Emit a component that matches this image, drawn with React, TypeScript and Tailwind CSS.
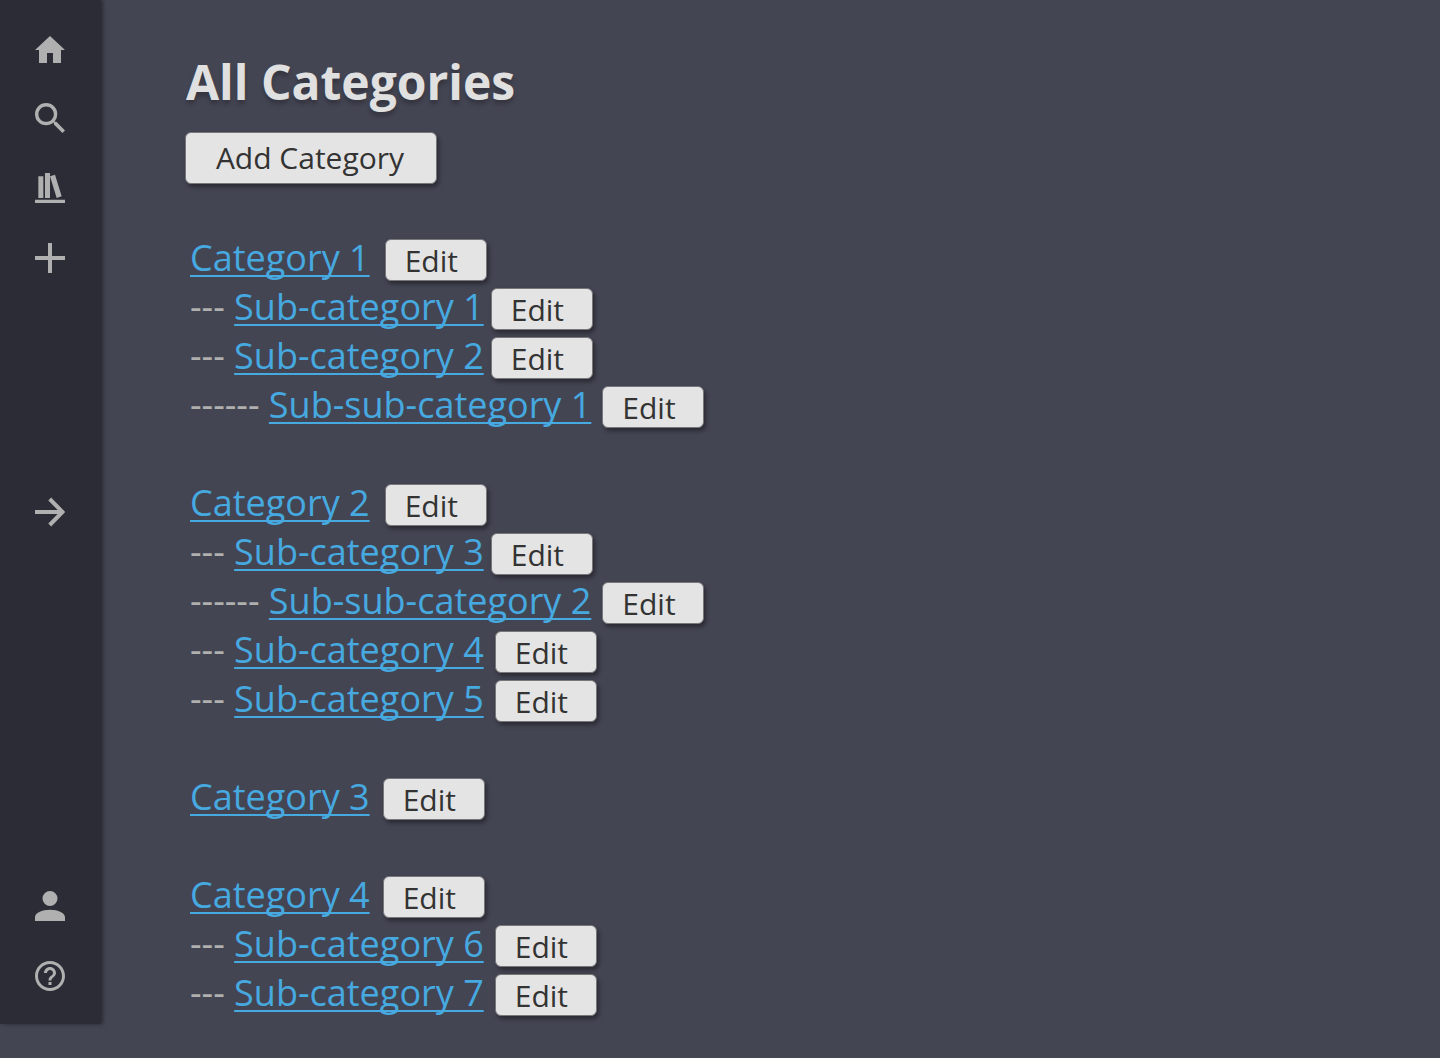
import type { ReactNode } from "react";

type Entry = { name: string; dashes: string; gap: string };

const groups: Entry[][] = [
  [
    { name: "Category 1", dashes: "", gap: "gap-[15px]" },
    { name: "Sub-category 1", dashes: "---", gap: "gap-[7px]" },
    { name: "Sub-category 2", dashes: "---", gap: "gap-[7px]" },
    { name: "Sub-sub-category 1", dashes: "------", gap: "gap-[11px]" },
  ],
  [
    { name: "Category 2", dashes: "", gap: "gap-[15px]" },
    { name: "Sub-category 3", dashes: "---", gap: "gap-[7px]" },
    { name: "Sub-sub-category 2", dashes: "------", gap: "gap-[11px]" },
    { name: "Sub-category 4", dashes: "---", gap: "gap-[11px]" },
    { name: "Sub-category 5", dashes: "---", gap: "gap-[11px]" },
  ],
  [{ name: "Category 3", dashes: "", gap: "gap-[13px]" }],
  [
    { name: "Category 4", dashes: "", gap: "gap-[13px]" },
    { name: "Sub-category 6", dashes: "---", gap: "gap-[11px]" },
    { name: "Sub-category 7", dashes: "---", gap: "gap-[11px]" },
  ],
];

function NavIcon({ label, box, children }: { label: string; box: string; children: ReactNode }) {
  return (
    <a href="#" aria-label={label} className="block size-[30px] text-[#b0b0b0]">
      <svg viewBox={box} className="block size-full" fill="currentColor" aria-hidden="true">
        {children}
      </svg>
    </a>
  );
}

function Sidebar() {
  return (
    <nav
      aria-label="Main"
      className="mb-[34px] flex w-[101px] shrink-0 flex-col bg-[#2c2c36] py-[33px] pl-[35px] shadow-[2px_0px_4px_rgba(0,0,0,0.4)]"
    >
      <div className="flex flex-1 flex-col gap-10">
        <NavIcon label="Home" box="0 0 30 30">
          <path d="M15 3 30 17h-4v13h-8V20h-6v10H4V17H0z" />
        </NavIcon>
        <NavIcon label="Search" box="3 3 17.49 17.49">
          <path d="M15.5 14h-.79l-.28-.27A6.47 6.47 0 0 0 16 9.5 6.5 6.5 0 1 0 9.5 16c1.61 0 3.09-.59 4.23-1.57l.27.28v.79l5 4.99L20.49 19l-4.99-5zm-6 0C7.01 14 5 11.99 5 9.5S7.01 5 9.5 5 14 7.01 14 9.5 11.99 14 9.5 14z" />
        </NavIcon>
        <NavIcon label="Library" box="3 3 18 18">
          <path d="M9 3v15h3V3H9m3 2 4 13 3-1-4-13-3 1M5 5v13h3V5H5M3 19v2h18v-2H3z" />
        </NavIcon>
        <NavIcon label="Add" box="0 0 30 30">
          <path d="M13 0h4v13h13v4H17v13h-4V17H0v-4h13z" />
        </NavIcon>
      </div>
      <NavIcon label="Expand" box="0 0 30 30">
        <path d="M0 13h26v4H0z" />
        <path d="M14.7 2 27.5 15 14.7 28" fill="none" stroke="currentColor" strokeWidth="4" />
      </NavIcon>
      <div className="flex flex-1 flex-col justify-end gap-10">
        <NavIcon label="Account" box="4 4 16 16">
          <path d="M12 4a4 4 0 1 1 0 8 4 4 0 0 1 0-8m0 10c4.42 0 8 1.79 8 4v2H4v-2c0-2.21 3.58-4 8-4z" />
        </NavIcon>
        <NavIcon label="Help" box="2 2 20 20">
          <path d="M11 18h2v-2h-2v2zm1-16C6.48 2 2 6.48 2 12s4.48 10 10 10 10-4.48 10-10S17.52 2 12 2zm0 18c-4.41 0-8-3.59-8-8s3.59-8 8-8 8 3.59 8 8-3.59 8-8 8zm0-14c-2.21 0-4 1.79-4 4h2c0-1.1.9-2 2-2s2 .9 2 2c0 2-3 1.75-3 5h2c0-2.25 3-2.5 3-5 0-2.21-1.79-4-4-4z" />
        </NavIcon>
      </div>
    </nav>
  );
}

function Row({ name, dashes, gap }: Entry) {
  return (
    <li className={`flex h-[49px] items-start ${gap}`}>
      <span className="whitespace-pre text-[36px] leading-[49px] text-[#b0b0b0]">
        {dashes && `${dashes} `}
        <a
          href="#"
          className="text-[#46a9e0] underline decoration-2 underline-offset-[4px] [text-decoration-skip-ink:none]"
        >
          {name}
        </a>
      </span>
      <button
        type="button"
        aria-label={`Edit ${name}`}
        className="mt-[6px] h-[42px] w-[102px] rounded-[6px] border border-[#77777a] bg-[#e4e4e4] pl-[19px] pt-[2px] text-left text-[30px] leading-[38px] text-[#333333] shadow-[2px_3px_4px_rgba(0,0,0,0.4)]"
      >
        Edit
      </button>
    </li>
  );
}

export default function App() {
  return (
    <div className="flex min-h-screen bg-[#444553] font-['Open_Sans',sans-serif]">
      <Sidebar />
      <main className="min-w-0 flex-1 pb-10 pl-[84px] pt-[49px]">
        <h1 className="pl-px text-[48px] font-bold leading-[65px] text-[#e0e0e0] [text-shadow:0_4px_4px_rgba(0,0,0,0.25)]">
          All Categories
        </h1>
        <button
          type="button"
          className="mt-[18px] block h-[52px] w-[252px] rounded-[6px] border border-[#77777a] bg-[#e4e4e4] pr-[2px] text-center text-[30px] leading-[50px] text-[#333333] shadow-[2px_3px_4px_rgba(0,0,0,0.4)]"
        >
          Add Category
        </button>
        <div className="mt-[49px] flex flex-col gap-[49px] pl-[5px]">
          {groups.map((group) => (
            <ul key={group[0].name}>
              {group.map((entry) => (
                <Row key={entry.name} {...entry} />
              ))}
            </ul>
          ))}
        </div>
      </main>
    </div>
  );
}
